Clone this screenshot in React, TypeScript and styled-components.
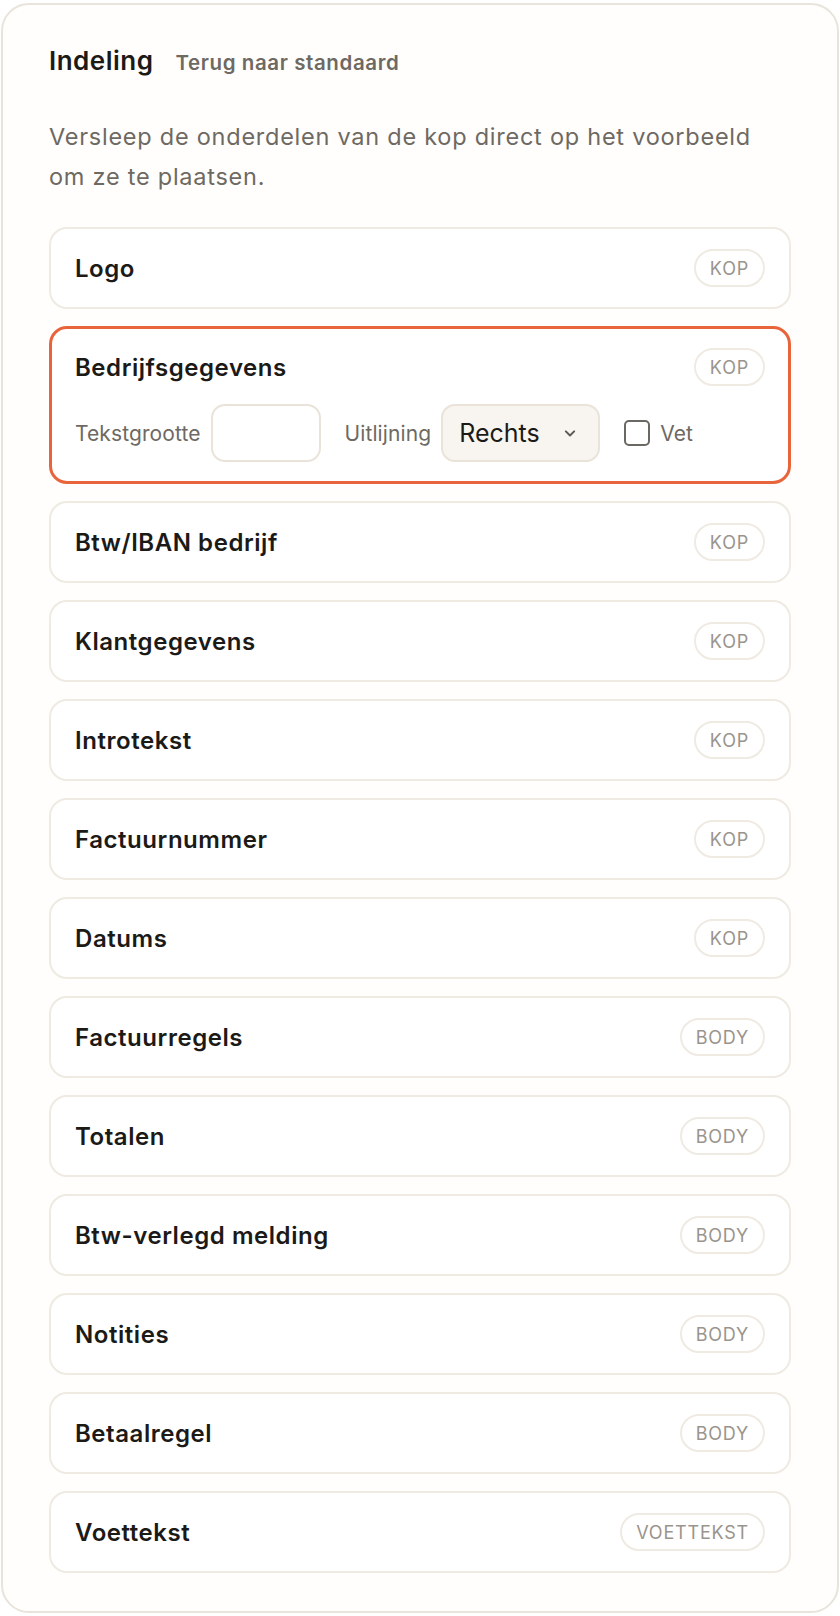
import styled, { createGlobalStyle, css } from "styled-components";

const GlobalStyle = createGlobalStyle`
    body {
        margin: 0;
        background: #ffffff;
        font-family: Inter, "Noto Sans", "DejaVu Sans", sans-serif;
        color: #1c1a17;
    }
`;

type Zone = "KOP" | "BODY" | "VOETTEKST";

const sections: { label: string; zone: Zone }[] = [
    { label: "Logo", zone: "KOP" },
    { label: "Bedrijfsgegevens", zone: "KOP" },
    { label: "Btw/IBAN bedrijf", zone: "KOP" },
    { label: "Klantgegevens", zone: "KOP" },
    { label: "Introtekst", zone: "KOP" },
    { label: "Factuurnummer", zone: "KOP" },
    { label: "Datums", zone: "KOP" },
    { label: "Factuurregels", zone: "BODY" },
    { label: "Totalen", zone: "BODY" },
    { label: "Btw-verlegd melding", zone: "BODY" },
    { label: "Notities", zone: "BODY" },
    { label: "Betaalregel", zone: "BODY" },
    { label: "Voettekst", zone: "VOETTEKST" },
];

const ChevronDown = () => (
    <svg width="20" height="20" viewBox="0 0 24 24" fill="none" stroke="#5f5a54" strokeWidth="2.4" strokeLinecap="round" strokeLinejoin="round">
        <path d="M7 10l5 5 5-5" />
    </svg>
);

const App = () => {
    const selected = "Bedrijfsgegevens";

    return (
        <Page>
            <GlobalStyle />
            <Card>
                <Header>
                    <Title>Indeling</Title>
                    <ResetButton>Terug naar standaard</ResetButton>
                </Header>

                <Description>
                    Versleep de onderdelen van de kop direct op het voorbeeld om ze te plaatsen.
                </Description>

                <List>
                    {sections.map(section => {
                        const active = section.label === selected;
                        return (
                            <Row key={section.label} active={active}>
                                <RowHead>
                                    <Label>{section.label}</Label>
                                    <Tag>{section.zone}</Tag>
                                </RowHead>

                                {active && (
                                    <Controls>
                                        <Field>
                                            <FieldLabel>Tekstgrootte</FieldLabel>
                                            <SizeInput type="text" />
                                        </Field>
                                        <Field>
                                            <FieldLabel>Uitlijning</FieldLabel>
                                            <Select>
                                                Rechts
                                                <ChevronDown />
                                            </Select>
                                        </Field>
                                        <Field>
                                            <Checkbox />
                                            <FieldLabel>Vet</FieldLabel>
                                        </Field>
                                    </Controls>
                                )}
                            </Row>
                        );
                    })}
                </List>
            </Card>
        </Page>
    );
};

export default App;

const Page = styled.div`
    padding: 3px 1px 2px 1px;
`;

const Card = styled.section`
    border: 2px solid #e9e4db;
    border-radius: 28px;
    background: #fffefd;
    padding: 40px 46px 38px;
`;

const Header = styled.div`
    display: flex;
    align-items: baseline;
    gap: 22px;
`;

const Title = styled.h2`
    margin: 0;
    font-size: 26px;
    line-height: 32px;
    font-weight: 600;
    letter-spacing: 0.5px;
    color: #1c1a17;
`;

const ResetButton = styled.button`
    border: none;
    background: none;
    padding: 0;
    font-family: inherit;
    font-size: 20.5px;
    font-weight: 600;
    letter-spacing: 0.6px;
    color: #6e6962;
    cursor: pointer;
`;

const Description = styled.p`
    margin: 40px 0 30px;
    font-size: 23.5px;
    line-height: 40px;
    letter-spacing: 0.75px;
    color: #6e6962;
`;

const List = styled.div`
    display: flex;
    flex-direction: column;
    gap: 17px;
`;

const Row = styled.div<{ active: boolean }>`
    display: flex;
    flex-direction: column;
    gap: 18px;
    border-radius: 18px;
    background: #ffffff;
    ${props => props.active
        ? css`
            border: 3px solid #e8653c;
            padding: 19px 23px;
        `
        : css`
            border: 2px solid #efeae2;
            padding: 20px 24px;
        `}
`;

const RowHead = styled.div`
    display: flex;
    align-items: center;
    justify-content: space-between;
`;

const Label = styled.span`
    font-size: 24px;
    font-weight: 600;
    letter-spacing: 0.55px;
    color: #1c1a17;
`;

const Tag = styled.span`
    display: inline-flex;
    align-items: center;
    height: 38px;
    box-sizing: border-box;
    padding: 0 14px;
    border: 2px solid #efeae2;
    border-radius: 999px;
    font-size: 18px;
    color: #9a948c;
    letter-spacing: 0.8px;
`;

const Controls = styled.div`
    display: flex;
    align-items: center;
    gap: 24px;
`;

const Field = styled.label`
    display: flex;
    align-items: center;
    gap: 10px;
`;

const FieldLabel = styled.span`
    font-size: 21px;
    letter-spacing: 0.1px;
    color: #6e6962;
`;

const SizeInput = styled.input`
    width: 110px;
    height: 58px;
    box-sizing: border-box;
    border: 2px solid #e9e3d9;
    border-radius: 14px;
    background: #ffffff;
    outline: none;
    font-family: inherit;
    font-size: 22px;
`;

const Select = styled.div`
    display: flex;
    align-items: center;
    justify-content: space-between;
    width: 159px;
    height: 58px;
    box-sizing: border-box;
    padding: 0 18px 0 16px;
    border: 2px solid #e9e3d9;
    border-radius: 14px;
    background: #f8f5f0;
    font-size: 25px;
    color: #1c1a17;
`;

const Checkbox = styled.span`
    width: 26px;
    height: 26px;
    box-sizing: border-box;
    border: 2px solid #6b6864;
    border-radius: 5px;
    background: #ffffff;
`;
